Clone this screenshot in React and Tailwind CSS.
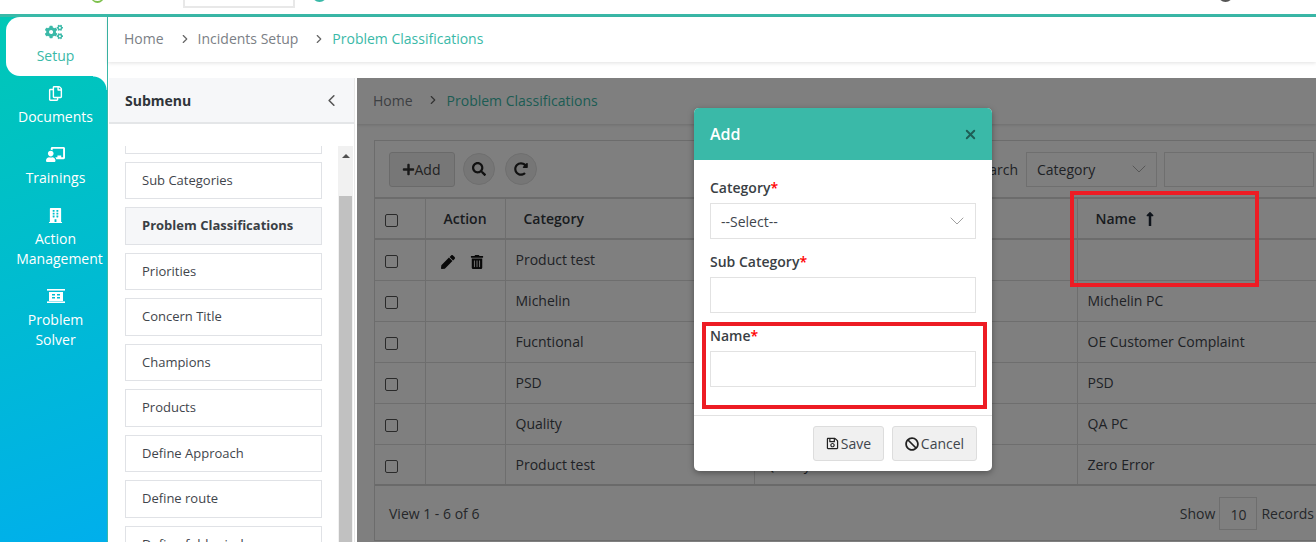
import { ChevronDown, ChevronLeft, ChevronRight, X } from 'lucide-react'
import {
  FaBan,
  FaBuilding,
  FaChalkboardTeacher,
  FaCogs,
  FaLongArrowAltUp,
  FaPen,
  FaPlus,
  FaRedoAlt,
  FaRegCopy,
  FaRegSave,
  FaSearch,
  FaTrashAlt,
} from 'react-icons/fa'

const SUBMENU = [
  'Categories',
  'Sub Categories',
  'Problem Classifications',
  'Priorities',
  'Concern Title',
  'Champions',
  'Products',
  'Define Approach',
  'Define route',
  'Define folder index',
]

const ROWS = [
  { category: 'Product test', sub: 'Quality', name: '', actions: true },
  { category: 'Michelin', sub: 'Michelin', name: 'Michelin PC' },
  { category: 'Fucntional', sub: 'Customer', name: 'OE Customer Complaint' },
  { category: 'PSD', sub: 'PSD', name: 'PSD' },
  { category: 'Quality', sub: 'Quality', name: 'QA PC' },
  { category: 'Product test', sub: 'Quality', name: 'Zero Error' },
]

const SolverIcon = () => (
  <svg width="18" height="14" viewBox="0 0 18 14" fill="white">
    <rect x="0" y="0" width="18" height="1.6" />
    <rect x="0" y="12.4" width="18" height="1.6" />
    <path fillRule="evenodd" d="M2 3h14v9H2zM5 5v1.5h3V5zM10 5v1.5h3V5zM5 8v1.5h3V8zM10 8v1.5h3V8z" />
  </svg>
)

const Checkbox = () => (
  <span className="block w-[13px] h-[13px] ml-[10px] mt-1 rounded-[2px] border border-[#555] bg-white" />
)

const Field = ({ label, children }) => (
  <div>
    <div className="h-5 leading-5 text-[14px] font-semibold text-[#3a3f45]">
      {label}
      <span className="text-[#f00]">*</span>
    </div>
    {children}
  </div>
)

const RailItem = ({ icon, children }) => (
  <div className="flex flex-col items-center text-white text-[14px] leading-5">
    <div className="h-4 flex items-center justify-center">{icon}</div>
    <div className="mt-[6px] text-center">{children}</div>
  </div>
)

export default function App() {
  return (
    <div className="relative h-screen w-full flex flex-col overflow-hidden bg-white font-['Open_Sans',sans-serif] text-[#343a40]">
      <header className="h-[14px] flex items-start overflow-hidden">
        <span className="ml-[91px] -mt-[10px] w-[13px] h-[13px] rounded-full border-b-2 border-r border-[#7cc04b] border-t-transparent border-l-transparent" />
        <span className="ml-[79px] w-[112px] h-[8px] border-2 border-t-0 border-[#e8e8e8]" />
        <span className="ml-[17px] -mt-[13px] w-[15px] h-[15px] rounded-full bg-[#3ab9a8]" />
        <span className="ml-[891px] -mt-[13px] w-[15px] h-[15px] rounded-full bg-[#555]" />
      </header>
      <div className="h-[3px] bg-[#3ab9a8]" />

      <div className="flex flex-1 min-h-0">
        <nav className="w-[107px] flex flex-col bg-[linear-gradient(160deg,#00c8b6_0%,#00afec_100%)]">
          <div className="ml-[6px] h-[59px] pt-[7px] rounded-l-[14px] bg-white flex flex-col items-center text-[14px] leading-5 text-[#3ab9a8] pr-[2px]">
            <div className="h-4 flex items-center -ml-[3px]">
              <FaCogs size={18} />
            </div>
            <div className="mt-[6px]">Setup</div>
          </div>
          <div className="self-end w-[14px] h-[14px] -mb-[14px] bg-[radial-gradient(circle_at_0_100%,transparent_13px,white_14px)]" />
          <div className="pt-[9px] flex flex-col gap-[19px] pl-1">
            <RailItem icon={<FaRegCopy size={15} />}>Documents</RailItem>
            <RailItem icon={<FaChalkboardTeacher size={19} />}>Trainings</RailItem>
            <RailItem icon={<FaBuilding size={15} />}>
              Action
              <span className="block ml-2 whitespace-nowrap">Management</span>
            </RailItem>
            <RailItem icon={<SolverIcon />}>
              Problem
              <br />
              Solver
            </RailItem>
          </div>
        </nav>
        <div className="w-px bg-[#3ab9a8]" />

        <div className="flex-1 min-w-0 flex flex-col">
          <div className="h-[45px] shrink-0 flex items-center pl-4 pb-[2px] text-[14px] text-[#7b8086] shadow-[0_1px_4px_rgba(0,0,0,0.12)]">
            <span>Home</span>
            <ChevronRight size={14} strokeWidth={2} className="ml-[14px] mr-[6px] text-[#666]" />
            <span>Incidents Setup</span>
            <ChevronRight size={14} strokeWidth={2} className="ml-[14px] mr-[6px] text-[#666]" />
            <span className="text-[#3ab9a8]">Problem Classifications</span>
          </div>

          <div className="mt-4 flex flex-1 min-h-0">
            <aside className="w-[247px] shrink-0 flex flex-col pl-px border-r border-[#e8e8e8]">
              <div className="h-[46px] shrink-0 flex items-center justify-between pl-4 pr-[13px] bg-[#f6f7f9] border-b-2 border-[#e4e6e8]">
                <span className="text-[14px] font-bold text-[#2f343a]">Submenu</span>
                <ChevronLeft size={19} strokeWidth={2} className="text-[#555]" />
              </div>
              <div className="flex-1 min-h-0 pt-[22px] flex">
                <div className="w-[213px] pl-4 overflow-hidden">
                  <ul className="-mt-[30px] flex flex-col gap-2">
                    {SUBMENU.map((item) => (
                      <li
                        key={item}
                        className={
                          item === 'Problem Classifications'
                            ? 'h-[37.5px] shrink-0 flex items-center pl-4 text-[13px] font-bold border border-[#e0e2e6] bg-[#f6f7f9] text-[#3a3f45]'
                            : 'h-[37.5px] shrink-0 flex items-center pl-4 text-[13px] border border-[#e0e2e6] text-[#3f454c]'
                        }
                      >
                        {item}
                      </li>
                    ))}
                  </ul>
                </div>
                <div className="ml-[16px] w-[15px] bg-[#f1f1f1] flex flex-col">
                  <div className="h-[19px] flex items-center justify-center">
                    <span className="border-x-[4px] border-x-transparent border-b-[4px] border-b-[#505050]" />
                  </div>
                  <div className="mt-[31px] flex-1 mx-px bg-[#c1c1c1]" />
                </div>
              </div>
            </aside>

            <main className="relative flex-1 min-w-0 ml-[2px] flex flex-col overflow-hidden">
              <div className="h-[46px] shrink-0 flex items-center pl-4 pb-[2px] text-[14px] text-[#7b8086] shadow-[0_1px_3px_rgba(0,0,0,0.15)]">
                <span>Home</span>
                <ChevronRight size={14} strokeWidth={2} className="ml-[13px] mr-[7px] text-[#666]" />
                <span className="text-[#3ab9a8]">Problem Classifications</span>
              </div>

              <section className="mt-4 ml-[17px] -mr-2 flex-1 flex flex-col border border-[#d8d8d8] mb-px">
                <div className="h-[56px] shrink-0 flex items-center pl-[14px] pr-[9px]">
                  <button className="h-[35px] w-[66px] pr-[2px] flex items-center justify-center rounded-[3px] border border-[#d5d5d5] bg-[#efefef] text-[14px] text-[#444]">
                    <FaPlus size={13} className="text-[#333]" />
                    Add
                  </button>
                  <span className="ml-2 w-8 h-8 rounded-full bg-[#ececec] border border-[#dedede] flex items-center justify-center">
                    <FaSearch size={14} className="text-[#222]" />
                  </span>
                  <span className="ml-[10px] w-8 h-8 rounded-full bg-[#ececec] border border-[#dedede] flex items-center justify-center">
                    <FaRedoAlt size={14} className="text-[#222]" />
                  </span>
                  <span className="ml-auto text-[14px] text-[#3f454c]">Search</span>
                  <div className="ml-2 w-[131px] h-[35px] flex items-center justify-between pl-[10px] pr-[5px] border border-[#dedede] text-[14px] text-[#3f454c]">
                    Category
                    <ChevronDown size={24} strokeWidth={0.8} className="text-[#999]" />
                  </div>
                  <div className="ml-[7px] w-[150px] h-[35px] border border-[#dedede]" />
                </div>

                <table className="w-full table-fixed border-collapse text-[14px] text-[#3f454c]">
                  <colgroup>
                    <col className="w-[50px]" />
                    <col className="w-[80px]" />
                    <col className="w-[249px]" />
                    <col className="w-[323px]" />
                    <col />
                  </colgroup>
                  <thead>
                    <tr className="h-[41px] border-y-2 border-[#d8d8d8] font-semibold text-[#33383e]">
                      <th className="border-r border-[#dcdcdc] font-semibold">
                        <Checkbox />
                      </th>
                      <th className="border-r border-[#dcdcdc] font-semibold">Action</th>
                      <th className="border-r border-[#dcdcdc] pl-[18px] text-left font-semibold">Category</th>
                      <th className="border-r border-[#dcdcdc] pl-[18px] text-left font-semibold">Sub Category</th>
                      <th className="pl-[18px] text-left font-semibold">
                        <span className="inline-flex items-center gap-[6px]">
                          Name
                          <FaLongArrowAltUp size={16} className="text-[#1f2937]" />
                        </span>
                      </th>
                    </tr>
                  </thead>
                  <tbody>
                    {ROWS.map((row, index) => (
                      <tr key={index} className="h-[41px] border-b border-[#dcdcdc] last:border-b-2 last:border-[#d4d4d4]">
                        <td className="border-r border-[#dcdcdc]">
                          <Checkbox />
                        </td>
                        <td className="border-r border-[#dcdcdc]">
                          {row.actions && (
                            <div className="flex items-center justify-center gap-[15px] pt-1 pr-[6px] text-[#111]">
                              <FaPen size={14} />
                              <FaTrashAlt size={14} />
                            </div>
                          )}
                        </td>
                        <td className="border-r border-[#dcdcdc] pl-[10px]">{row.category}</td>
                        <td className="border-r border-[#dcdcdc] pl-[10px]">{row.sub}</td>
                        <td className="pl-[10px]">{row.name}</td>
                      </tr>
                    ))}
                  </tbody>
                </table>

                <div className="flex-1 flex items-center justify-between pl-[14px] pr-[9px] text-[14px] text-[#4a4f55]">
                  <span>View 1 - 6 of 6</span>
                  <div className="flex items-center">
                    <span>Show</span>
                    <span className="ml-1 w-[38px] h-[33px] pt-[2px] flex items-center justify-center border border-[#dcdcdc]">10</span>
                    <span className="ml-1">Records</span>
                  </div>
                </div>
              </section>

              <div className="absolute inset-0 bg-black/50" />

              <div className="absolute left-[337px] top-[30px] w-[298px] h-[363px] flex flex-col overflow-hidden rounded-[5px] bg-white shadow-[0_2px_6px_rgba(0,0,0,0.35)]">
                <div className="h-[52px] shrink-0 flex items-center justify-between pl-4 pr-[14px] bg-[#3ab9a8]">
                  <span className="text-[16px] font-semibold text-white">Add</span>
                  <X size={15} strokeWidth={3} className="text-[#1e5f56]" />
                </div>
                <div className="flex-1 px-4 pt-[18px] flex flex-col gap-[13px]">
                  <Field label="Category">
                    <div className="h-9 mt-[5px] flex items-center justify-between pl-[10px] pr-[6px] border border-[#e2e2e2] text-[14px] text-[#3f454c]">
                      --Select--
                      <ChevronDown size={24} strokeWidth={0.8} className="text-[#888]" />
                    </div>
                  </Field>
                  <Field label="Sub Category">
                    <div className="h-9 mt-[5px] border border-[#e2e2e2]" />
                  </Field>
                  <Field label="Name">
                    <div className="h-9 mt-[5px] border border-[#e2e2e2]" />
                  </Field>
                </div>
                <div className="h-[56px] shrink-0 flex items-start justify-end gap-2 pt-[10px] pr-[15px] border-t border-[#e2e2e2]">
                  <button className="w-[71px] h-[35px] flex items-center justify-center gap-[2px] rounded-[3px] border border-[#ddd] bg-[#f0f0f0] text-[14px] text-[#3f454c]">
                    <FaRegSave size={13} className="text-[#222]" />
                    Save
                  </button>
                  <button className="w-[85px] h-[35px] flex items-center justify-center gap-[2px] rounded-[3px] border border-[#ddd] bg-[#f0f0f0] text-[14px] text-[#3f454c]">
                    <FaBan size={14} className="text-[#222]" />
                    Cancel
                  </button>
                </div>
              </div>
            </main>
          </div>
        </div>
      </div>

      {/* review markers drawn over the screen */}
      <div className="absolute left-[1070px] top-[191px] w-[189px] h-[96px] border-4 border-[#ed1c24]" />
      <div className="absolute left-[702px] top-[322px] w-[285px] h-[87px] border-4 border-[#ed1c24]" />
    </div>
  )
}
